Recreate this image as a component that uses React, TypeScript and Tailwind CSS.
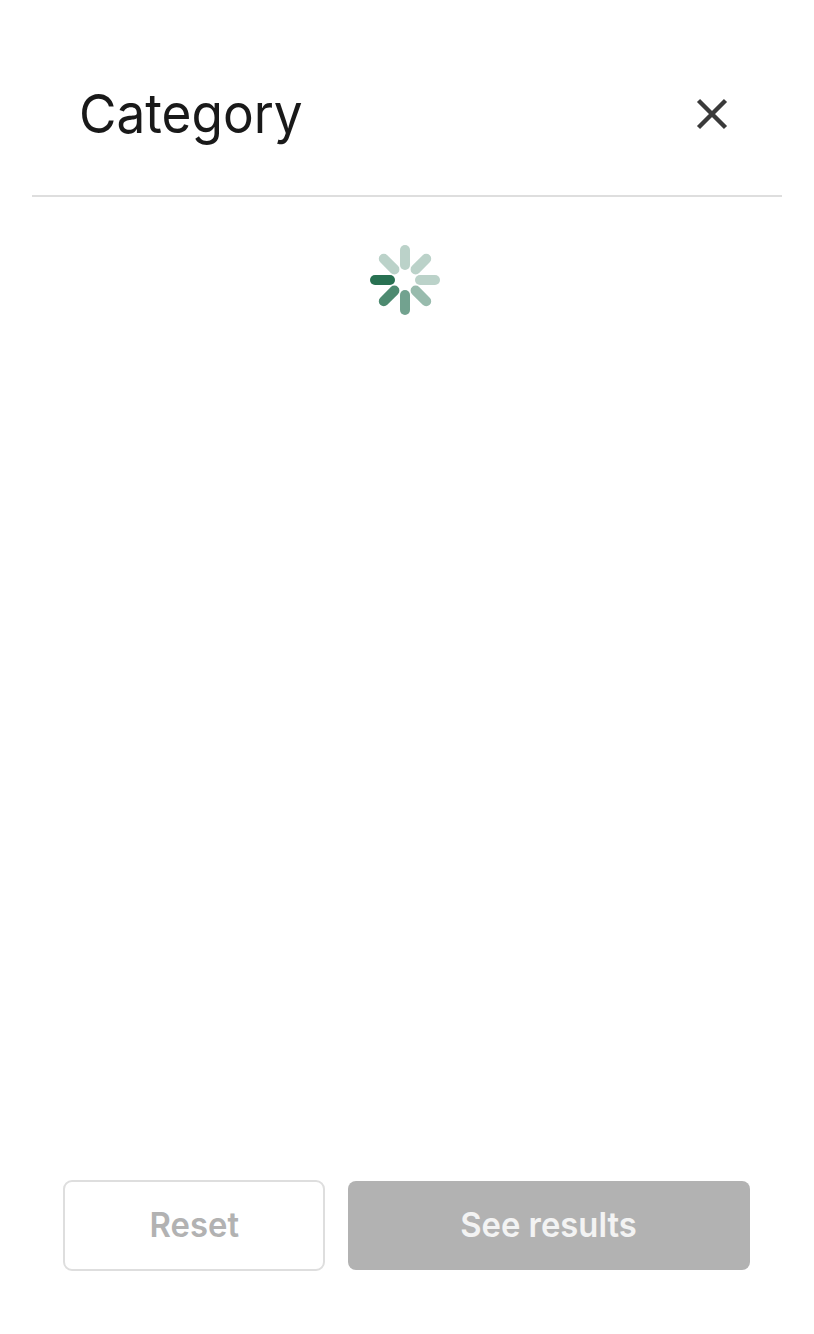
const petals = [
  { angle: 0, color: "#bbd2c9" },
  { angle: 45, color: "#bbd2c9" },
  { angle: 90, color: "#bbd2c9" },
  { angle: 135, color: "#98bbad" },
  { angle: 180, color: "#72a28f" },
  { angle: 225, color: "#4d8a70" },
  { angle: 270, color: "#287152" },
  { angle: 315, color: "#bbd2c9" },
];

function Spinner() {
  return (
    <svg width="70" height="70" viewBox="-35 -35 70 70" role="status">
      {petals.map((p) => (
        <rect key={p.angle} x="-5" y="-35" width="10" height="25" rx="5" fill={p.color} transform={`rotate(${p.angle})`} />
      ))}
    </svg>
  );
}

export default function App() {
  return (
    <div className="flex h-[1334px] w-[814px] flex-col bg-white px-8 font-['Inter',sans-serif]">
      <header className="flex h-[197px] items-start justify-between border-b-2 border-[#dedede] pt-[72px] pr-[54px] pl-[47px]">
        <h1 className="origin-left scale-x-[0.95] text-[54px] leading-[84px] text-[#191919]">Category</h1>
        <button className="mt-[26px]">
          <svg width="32" height="32" viewBox="0 0 32 32" fill="none" stroke="#3a3a3a" strokeWidth="4.4">
            <path d="M2.5 2.5 29.5 29.5M29.5 2.5 2.5 29.5" />
          </svg>
        </button>
      </header>
      <main className="flex flex-1 justify-center pt-12 pr-1">
        <Spinner />
      </main>
      <footer className="flex gap-[23px] pr-8 pb-[63px] pl-[31px]">
        <button className="h-[91px] w-[262px] rounded-[9px] border-2 border-[#dedede] pb-[2px] text-[34px] font-semibold text-[#b2b2b2]">
          <span className="inline-block scale-x-[0.965]">Reset</span>
        </button>
        <button className="mt-px h-[89px] w-[402px] rounded-[8px] bg-[#b2b2b2] pb-[2px] text-[34px] font-semibold text-[#f3f3f3]">
          <span className="inline-block scale-x-[0.965]">See results</span>
        </button>
      </footer>
    </div>
  );
}
